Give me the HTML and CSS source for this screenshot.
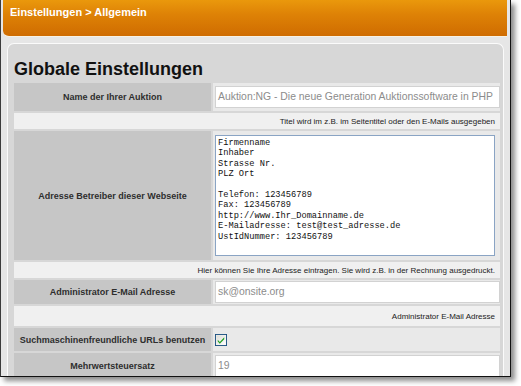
FILE: index.html
```html
<!DOCTYPE html>
<html lang="de">
<head>
<meta charset="utf-8">
<title>Einstellungen &gt; Allgemein</title>
<link rel="stylesheet" href="styles.css">
</head>
<body>
<div class="shot">
  <div class="topbar">Einstellungen &gt; Allgemein</div>
  <div class="panel">
    <h1 class="title">Globale Einstellungen</h1>
    <table class="settings">
      <tr class="row r-name">
        <th>Name der Ihrer Auktion</th>
        <td><div class="field">Auktion:NG - Die neue Generation Auktionssoftware in PHP</div></td>
      </tr>
      <tr class="desc d1"><td colspan="2">Titel wird im z.B. im Seitentitel oder den E-Mails ausgegeben</td></tr>
      <tr class="row r-addr">
        <th>Adresse Betreiber dieser Webseite</th>
        <td><div class="area">Firmenname
Inhaber
Strasse Nr.
PLZ Ort

Telefon: 123456789
Fax: 123456789
http://www.Ihr_Domainname.de
E-Mailadresse: test@test_adresse.de
UstIdNummer: 123456789</div></td>
      </tr>
      <tr class="desc d2"><td colspan="2">Hier können Sie Ihre Adresse eintragen. Sie wird z.B. in der Rechnung ausgedruckt.</td></tr>
      <tr class="row r-mail">
        <th>Administrator E-Mail Adresse</th>
        <td><div class="field">sk@onsite.org</div></td>
      </tr>
      <tr class="desc d3"><td colspan="2">Administrator E-Mail Adresse</td></tr>
      <tr class="row r-seo">
        <th>Suchmaschinenfreundliche URLs benutzen</th>
        <td><span class="check"><svg width="12" height="12" viewBox="0 0 13 13"><defs><linearGradient id="g" x1="0" y1="0" x2="1" y2="1"><stop offset="0" stop-color="#dcdcd6"/><stop offset="1" stop-color="#ffffff"/></linearGradient></defs><rect x="0.5" y="0.5" width="12" height="12" fill="#f4f4f0" stroke="#1c5180"/><rect x="1.5" y="1.5" width="10" height="10" fill="url(#g)"/><path d="M3 6.2 L5.2 8.6 L10 3.6 L10 5.6 L5.2 10.6 L3 8.2 Z" fill="#21a121"/></svg></span></td>
      </tr>
      <tr class="row r-vat">
        <th>Mehrwertsteuersatz</th>
        <td><div class="field">19</div></td>
      </tr>
    </table>
  </div>
</div>
</body>
</html>
```

FILE: styles.css
```css
* { box-sizing: border-box; }
html, body { margin: 0; padding: 0; background: #ffffff; }
body {
  width: 521px;
  height: 386px;
  overflow: hidden;
  font-family: "Liberation Sans", Arial, sans-serif;
}
.shot {
  width: 511px;
  height: 377px;
  background: #e6e6e6;
  border-left: 1px solid #3c3c3c;
  border-right: 1px solid #111111;
  border-bottom: 1px solid #111111;
  box-shadow: 4px 4px 5px rgba(0, 0, 0, 0.45);
  padding: 0 3px 0 2px;
  overflow: hidden;
}
.topbar {
  height: 37px;
  background: linear-gradient(#ea980c, #de8206 40%, #cf6c01 100%);
  border-bottom: 1px solid #f7f1e4;
  border-bottom-left-radius: 6px;
  color: #ffffff;
  font-weight: bold;
  font-size: 11px;
  line-height: 13px;
  padding: 6px 0 0 7px;
}
.panel {
  margin: 6px 3px 0 4px;
  background: #d7d7d7;
  border: 1px solid #fbfbfb;
  border-bottom: none;
  border-radius: 7px 7px 0 0;
  padding: 14px 1px 0 4px;
  height: 400px;
}
.title {
  margin: 0 0 1px 2px;
  font-size: 18px;
  line-height: 22px;
  font-weight: bold;
  color: #111111;
}
.settings {
  width: 490px;
  border-collapse: separate;
  border-spacing: 2px;
  table-layout: fixed;
}
.settings th {
  width: 197px;
  background: #c6c6c6;
  color: #2e2e2e;
  font-size: 9px;
  font-weight: bold;
  text-align: center;
  padding: 0;
}
.settings .row td {
  background: #e9e9e9;
  padding: 0 0 0 2px;
  vertical-align: middle;
}
.r-name th, .r-name td { height: 28px; }
.r-addr th, .r-addr td { height: 129px; }
.r-mail th, .r-mail td { height: 24px; }
.r-seo th, .r-seo td { height: 23px; }
.r-vat th, .r-vat td { height: 26px; }
.desc td {
  background: #f0f0f0;
  text-align: right;
  font-size: 8px;
  color: #222222;
  padding: 0 5px 0 0;
}
.d1 td, .d2 td { height: 16px; }
.d3 td { height: 20px; }
.field {
  height: 22px;
  background: #ffffff;
  border: 1px solid #d2d2d2;
  color: #8c8c8c;
  font-size: 10.4px;
  line-height: 20px;
  padding: 0 2px;
  white-space: nowrap;
  overflow: hidden;
}
.area {
  width: 280px;
  height: 121px;
  background: #ffffff;
  border: 1px solid #8aa4c4;
  font-family: "Liberation Mono", "Courier New", monospace;
  font-size: 8.7px;
  line-height: 10.4px;
  color: #111111;
  white-space: pre;
  padding: 2px 2px;
  overflow: hidden;
}
.check {
  display: flex;
  width: 12px;
  height: 12px;
}
.check svg { display: block; }
```
